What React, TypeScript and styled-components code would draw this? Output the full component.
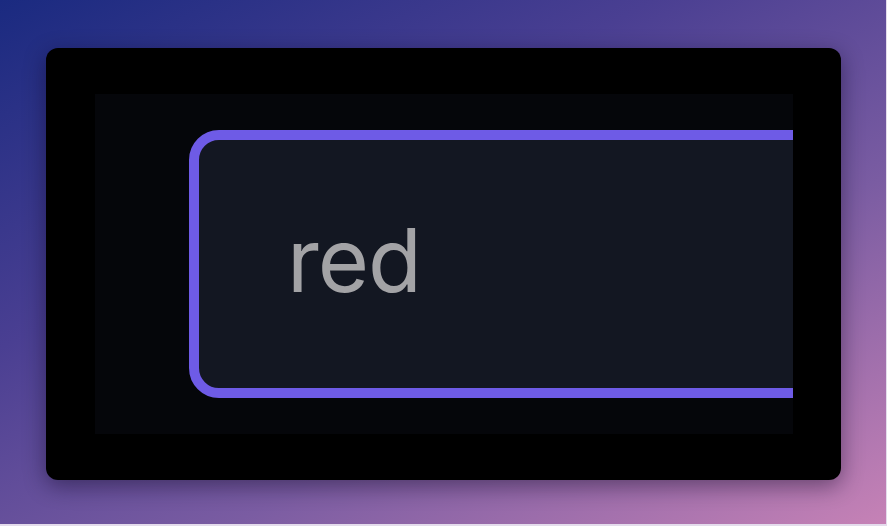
import React from 'react';
import styled, { createGlobalStyle } from 'styled-components';

const GlobalStyle = createGlobalStyle`
    html, body {
        margin: 0;
        padding: 0;
        width: 100%;
        height: 100%;
        overflow: hidden;
    }
    #root {
        width: 100%;
        height: 100%;
    }
`;

const Backdrop = styled.div`
    box-sizing: border-box;
    width: 887px;
    height: 526px;
    padding: 48px 46px 46px 46px;
    background: linear-gradient(152deg, #1a2a80 0%, #4a3f92 35%, #7a5ca2 65%, #c682b6 100%);
    border-right: 1px solid #e4dcec;
    border-bottom: 2px solid #e4dcec;
`;

const Card = styled.div`
    box-sizing: border-box;
    width: 795px;
    height: 432px;
    padding: 46px 48px 46px 49px;
    background: #000;
    border-radius: 12px;
    box-shadow: 0 6px 22px rgba(10, 5, 30, 0.45);
`;

const Stage = styled.div`
    box-sizing: border-box;
    width: 698px;
    height: 340px;
    padding: 36px 0 0 94px;
    background: #05060a;
    overflow: hidden;
`;

const Field = styled.div`
    box-sizing: border-box;
    display: flex;
    align-items: center;
    width: 760px;
    height: 268px;
    padding: 0 0 8px 88px;
    background: #131722;
    border: 10px solid #6e5be6;
    border-radius: 30px;
`;

const Value = styled.span`
    font-family: Inter, "Noto Sans", sans-serif;
    font-size: 88px;
    color: #a3a3a6;
    letter-spacing: -1px;
`;

export default function App() {
    return (
        <>
            <GlobalStyle />
            <Backdrop>
                <Card>
                    <Stage>
                        <Field>
                            <Value>red</Value>
                        </Field>
                    </Stage>
                </Card>
            </Backdrop>
        </>
    );
}
